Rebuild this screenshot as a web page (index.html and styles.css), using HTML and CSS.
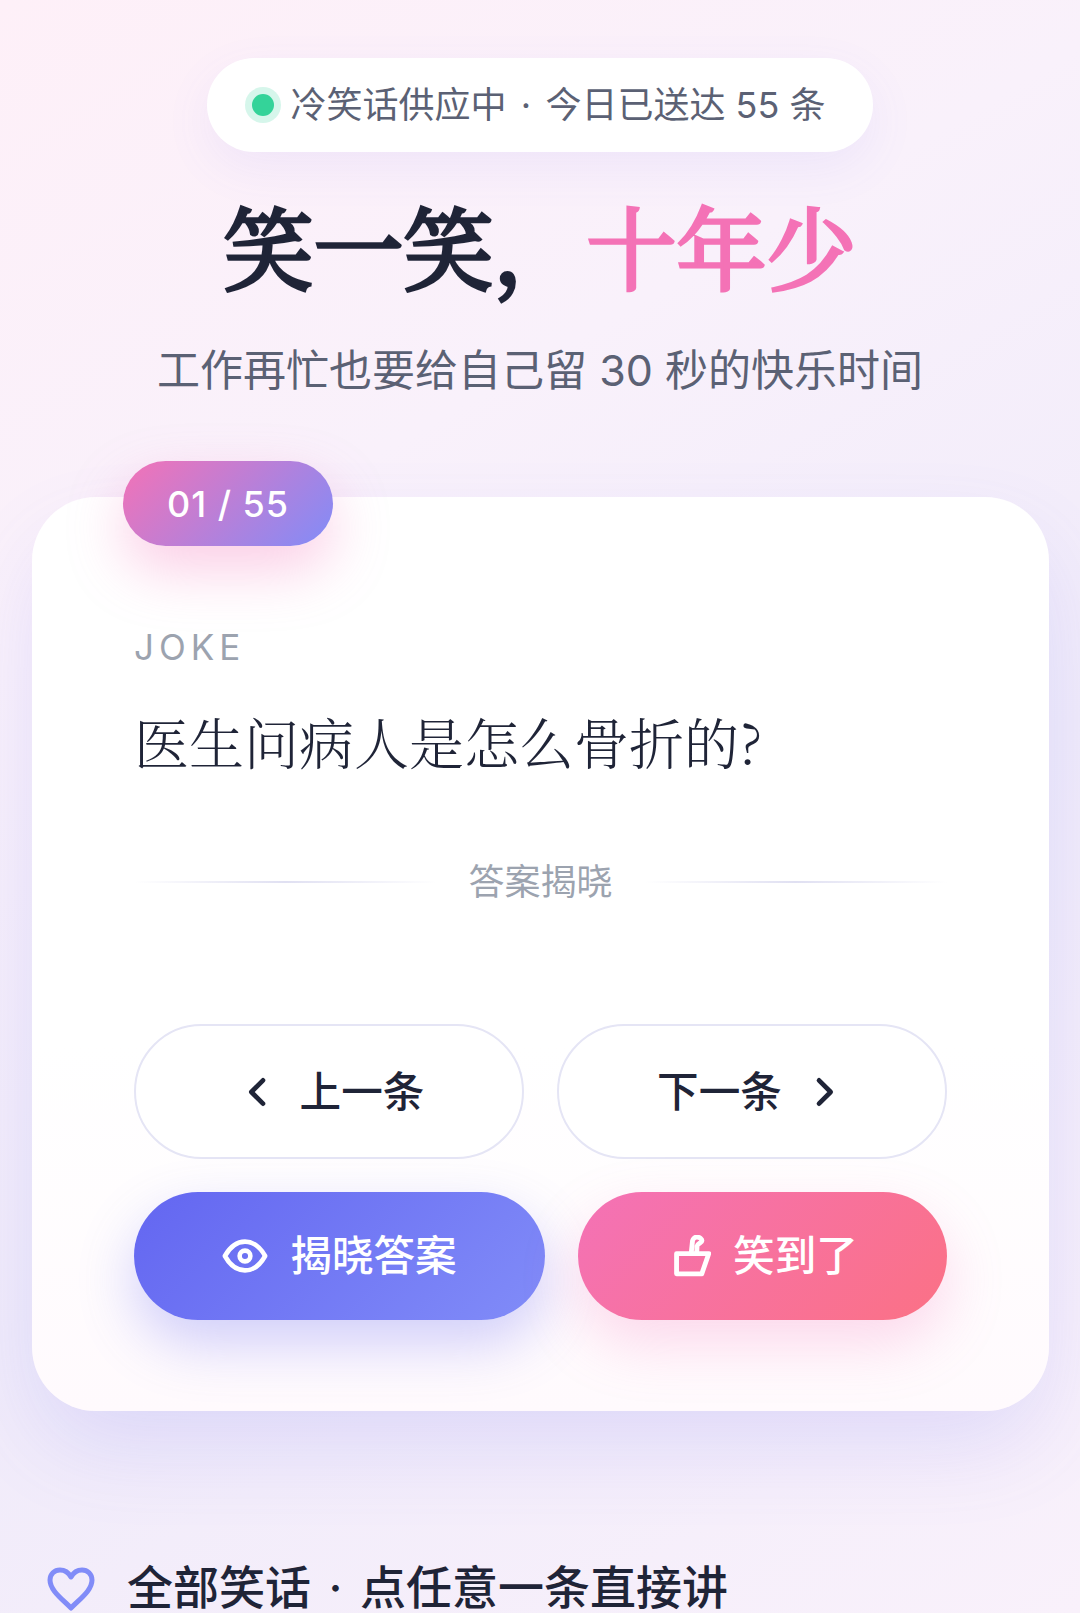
FILE: index.html
```html
<!DOCTYPE html>
<html lang="zh-CN">
<head>
  <meta charset="UTF-8" />
  <meta name="viewport" content="width=device-width, initial-scale=1.0"/>
  <title>冷笑话</title>
  <link rel="stylesheet" href="styles.css">
</head>
<body>

  <div class="status-wrap">
    <div class="status-pill">
      <span class="status-dot"></span>
      <span class="label">冷笑话供应中 <span class="sep">·</span> 今日已送达 55 条</span>
    </div>
  </div>

  <h1 class="page-title">笑一笑，<span class="accent">十年少</span></h1>
  <p class="page-sub">工作再忙也要给自己留 30 秒的快乐时间</p>

  <div class="joke-card">
    <div class="joke-index">01 / 55</div>
    <div class="joke-label">JOKE</div>
    <div class="joke-text">医生问病人是怎么骨折的?</div>
    <div class="reveal-line">
      <span class="rule"></span>
      <span>答案揭晓</span>
      <span class="rule"></span>
    </div>

    <div class="nav-row">
      <button class="btn btn-ghost btn-prev">
        <svg class="icon" viewBox="0 0 24 24"><path d="M15 5l-7 7 7 7"/></svg>
        <span class="label">上一条</span>
      </button>
      <button class="btn btn-ghost btn-next">
        <span class="label">下一条</span>
        <svg class="icon" viewBox="0 0 24 24"><path d="M9 5l7 7-7 7"/></svg>
      </button>
    </div>
    <div class="action-row">
      <button class="btn btn-reveal">
        <svg class="icon icon-eye" viewBox="0 0 24 24"><path d="M1.500 12c2.700-4.800 6.200-7.500 10.500-7.500s7.800 2.700 10.500 7.500c-2.700 4.800-6.200 7.500-10.500 7.500S4.200 16.800 1.500 12z"/><circle cx="12" cy="12" r="2.800"/></svg>
        <span class="label">揭晓答案</span>
      </button>
      <button class="btn btn-laugh">
        <svg class="icon icon-thumb" viewBox="0 0 36 40"><path d="M3.300 17.700H34L27.300 37H3.300z"/><path d="M17.300 17L18.500 5.500C19 3 21 1.800 23 2c2.500.2 4.500 1.800 4.500 3.500C27.500 7.500 23 8 22.800 10.500L22.500 17"/></svg>
        <span class="label">笑到了</span>
      </button>
    </div>
  </div>

  <div class="list-head">
    <svg class="heart" viewBox="0 0 48 44"><path d="M24 41C14 31 3 23 3 13 3 7 7.500 3 13 3c4.500 0 8.500 2.500 11 7 2.500-4.500 6.500-7 11-7 5.500 0 10 4 10 10 0 10-11 18-21 28z"/></svg>
    <h2 class="list-title">全部笑话 <span class="sep">·</span> 点任意一条直接讲</h2>
  </div>

</body>
</html>
```

FILE: styles.css
```css
html, body {
  height: 100%;
}
body {
  margin: 0;
  height: 1613px;
  overflow: hidden;
  font-family: Inter, "Noto Sans CJK SC", sans-serif;
  color: #1f2437;
  background: linear-gradient(150deg, #fef0f8 0%, #f9f1fb 30%, #f0ebfa 60%, #f9f1fb 100%);
}
.status-wrap {
  display: flex;
  justify-content: center;
  padding-top: 58px;
}
.status-pill {
  display: flex;
  align-items: center;
  gap: 10px;
  height: 94px;
  padding: 0 48px 0 38px;
  border-radius: 47px;
  background: #fff;
  box-shadow: 0 16px 48px rgba(99, 102, 241, 0.08);
  font-size: 36px;
  color: #5b6174;
  white-space: nowrap;
}
.status-dot {
  width: 22px;
  height: 22px;
  border-radius: 50%;
  background: #34d399;
  box-shadow: 0 0 0 7px rgba(52, 211, 153, 0.2);
  margin-left: 7px;
  margin-right: 7px;
}
.label {
  padding-bottom: 6px;
}
.sep {
  margin: 0 0.115em;
}
.page-title {
  margin: 32px 0 0;
  text-align: center;
  font-family: "Noto Serif CJK SC", "Liberation Serif", serif;
  font-size: 90px;
  line-height: 120px;
  font-weight: 400;
  -webkit-text-stroke: 3.6px currentColor;
  color: #1f2437;
}
.accent {
  margin-left: 3px;
  color: #f472b6;
}
.page-sub {
  margin: 36px 0 0;
  text-align: center;
  font-size: 43px;
  line-height: 60px;
  color: #5b6174;
}
.joke-card {
  position: relative;
  margin: 97px 31px 0 32px;
  height: 914px;
  box-sizing: border-box;
  padding: 128px 102px 0;
  border-radius: 64px;
  background: linear-gradient(180deg, #fff 60%, #fffafd 100%);
  box-shadow: 0 40px 90px -10px rgba(99, 102, 241, 0.16);
}
.joke-index {
  position: absolute;
  top: -36px;
  left: 91px;
  width: 210px;
  height: 85px;
  border-radius: 43px;
  display: flex;
  align-items: center;
  justify-content: center;
  font-size: 36px;
  font-weight: 500;
  letter-spacing: 1px;
  color: #fff;
  background: linear-gradient(135deg, #f472b6, #818cf8);
  box-shadow: 0 24px 56px rgba(244, 114, 182, 0.35);
}
.joke-label {
  font-size: 35px;
  line-height: 44px;
  letter-spacing: 5px;
  color: #9ca3af;
}
.joke-text {
  margin-top: 30px;
  font-family: "Noto Serif CJK SC", "Liberation Serif", serif;
  font-size: 55px;
  line-height: 84px;
  font-weight: 300;
  color: #1f2437;
}
.reveal-line {
  margin-top: 75px;
  display: flex;
  align-items: center;
  gap: 32px;
  font-size: 36px;
  line-height: 48px;
  color: #9ca3af;
}
.rule {
  flex: 1;
  height: 2px;
  background: linear-gradient(90deg, transparent, #e0e0f2, transparent);
}
.nav-row {
  margin-top: 118px;
  display: grid;
  grid-template-columns: 1fr 1fr;
  gap: 33px;
}
.action-row {
  margin-top: 33px;
  display: grid;
  grid-template-columns: 411fr 369fr;
  gap: 33px;
}
.btn {
  display: flex;
  align-items: center;
  justify-content: center;
  padding: 0;
  border: none;
  border-radius: 70px;
  font-family: inherit;
  font-size: 41.6px;
  font-weight: 500;
}
.btn-ghost {
  height: 135px;
  gap: 22px;
  background: #fff;
  color: #1f2437;
  border: 2px solid #e5e5f5;
}
.btn-prev {
  padding-left: 4px;
}
.btn-next {
  padding-right: 3px;
}
.btn-reveal, .btn-laugh {
  height: 128px;
  gap: 22px;
  color: #fff;
}
.btn-reveal {
  background: linear-gradient(135deg, #6366f1, #818cf8);
  box-shadow: 0 24px 56px rgba(99, 102, 241, 0.3);
}
.btn-laugh {
  padding-left: 6px;
  background: linear-gradient(135deg, #f472b6, #fb7185);
  box-shadow: 0 24px 56px rgba(244, 114, 182, 0.25);
}
.icon {
  width: 40px;
  height: 40px;
  fill: none;
  stroke: currentColor;
  stroke-width: 2.8;
  stroke-linecap: round;
  stroke-linejoin: round;
}
.icon-eye {
  width: 46px;
  height: 46px;
  stroke-width: 2.4;
}
.icon-thumb {
  width: 38px;
  height: 42px;
  stroke-width: 4.6;
}
.list-head {
  margin: 146px 0 0 47px;
  display: flex;
  align-items: center;
  gap: 32px;
}
.heart {
  width: 48px;
  height: 44px;
  margin-top: 4px;
  fill: none;
  stroke: #818cf8;
  stroke-width: 5;
  stroke-linejoin: round;
}
.list-title {
  margin: 0;
  font-size: 46px;
  line-height: 60px;
  font-weight: 500;
  color: #1f2437;
}
```
